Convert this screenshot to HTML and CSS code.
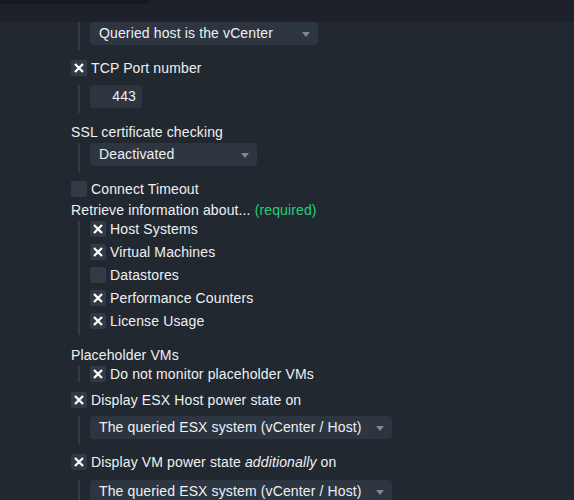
FILE: index.html
```html
<!DOCTYPE html>
<html>
<head>
<meta charset="utf-8">
<link rel="stylesheet" href="styles.css">
</head>
<body>
<div class="topbar"><div class="tab"></div></div>
<div class="form">
  <div class="nest n1">
    <div class="select w-vcenter"><span>Queried host is the vCenter</span><i class="arrow"></i></div>
  </div>

  <div class="check-row r-tcp">
    <span class="cb"><svg viewBox="0 0 16 16"><path d="M4 4 L12 12 M12 4 L4 12"/></svg></span>
    <span>TCP Port number</span>
  </div>
  <div class="nest n2">
    <div class="input">443</div>
  </div>

  <div class="label l-ssl">SSL certificate checking</div>
  <div class="nest n3">
    <div class="select w-deact"><span>Deactivated</span><i class="arrow"></i></div>
  </div>

  <div class="check-row r-timeout">
    <span class="cb"></span>
    <span>Connect Timeout</span>
  </div>
  <div class="label l-retrieve">Retrieve information about... <span class="req">(required)</span></div>
  <div class="nest n4">
    <div class="list">
      <div class="check-row"><span class="cb"><svg viewBox="0 0 16 16"><path d="M4 4 L12 12 M12 4 L4 12"/></svg></span><span>Host Systems</span></div>
      <div class="check-row"><span class="cb"><svg viewBox="0 0 16 16"><path d="M4 4 L12 12 M12 4 L4 12"/></svg></span><span>Virtual Machines</span></div>
      <div class="check-row"><span class="cb"></span><span>Datastores</span></div>
      <div class="check-row"><span class="cb"><svg viewBox="0 0 16 16"><path d="M4 4 L12 12 M12 4 L4 12"/></svg></span><span>Performance Counters</span></div>
      <div class="check-row"><span class="cb"><svg viewBox="0 0 16 16"><path d="M4 4 L12 12 M12 4 L4 12"/></svg></span><span>License Usage</span></div>
    </div>
  </div>

  <div class="label l-placeholder">Placeholder VMs</div>
  <div class="nest n5">
    <div class="check-row"><span class="cb"><svg viewBox="0 0 16 16"><path d="M4 4 L12 12 M12 4 L4 12"/></svg></span><span>Do not monitor placeholder VMs</span></div>
  </div>

  <div class="check-row r-esx">
    <span class="cb"><svg viewBox="0 0 16 16"><path d="M4 4 L12 12 M12 4 L4 12"/></svg></span>
    <span>Display ESX Host power state on</span>
  </div>
  <div class="nest n6">
    <div class="select w-esx"><span>The queried ESX system (vCenter / Host)</span><i class="arrow"></i></div>
  </div>

  <div class="check-row r-vm">
    <span class="cb"><svg viewBox="0 0 16 16"><path d="M4 4 L12 12 M12 4 L4 12"/></svg></span>
    <span>Display VM power state <em>additionally</em> on</span>
  </div>
  <div class="nest n7">
    <div class="select w-esx"><span>The queried ESX system (vCenter / Host)</span><i class="arrow"></i></div>
  </div>
</div>
</body>
</html>
```

FILE: styles.css
```css
html, body {
  margin: 0;
  padding: 0;
}
body {
  background: #222830;
  color: #eef0f2;
  font-family: "Liberation Sans", Arial, sans-serif;
  font-size: 14px;
  line-height: 16px;
  letter-spacing: 0.13px;
  overflow: hidden;
  height: 500px;
}
.topbar {
  height: 22px;
  background: #1e2129;
}
.tab {
  width: 150px;
  height: 4px;
  background: #151a21;
  border-bottom-right-radius: 4px;
}
.form {
  padding-left: 71px;
  display: flex;
  flex-direction: column;
  align-items: flex-start;
}
.nest {
  margin-left: 7px;
  border-left: 2px solid #343b46;
  padding-left: 10px;
  padding-bottom: 5px;
  align-self: stretch;
}
.select {
  height: 23px;
  background: #2d3541;
  border-radius: 4px;
  display: flex;
  align-items: center;
  justify-content: space-between;
  padding: 0 8px 0 9px;
  box-sizing: border-box;
  line-height: 16px;
}
.select span {
  position: relative;
  top: -1px;
}
.arrow {
  width: 0;
  height: 0;
  border-left: 4px solid transparent;
  border-right: 4px solid transparent;
  border-top: 5px solid #7f8791;
  margin-top: 2px;
}
.w-vcenter { width: 228px; }
.w-deact { width: 167px; }
.w-esx { width: 302px; }
.input {
  width: 52px;
  height: 23px;
  background: #2d3541;
  border-radius: 4px;
  box-sizing: border-box;
  text-align: right;
  padding-right: 6px;
  line-height: 22px;
}
.check-row {
  display: flex;
  align-items: center;
  gap: 4px;
  height: 16px;
}
.cb {
  width: 16px;
  height: 16px;
  background: #323a46;
  border-radius: 2px;
  flex: none;
  display: flex;
}
.cb svg {
  width: 16px;
  height: 16px;
}
.cb svg path {
  stroke: #ffffff;
  stroke-width: 2.3;
  fill: none;
}
.req { color: #22cf7d; }
em { font-style: italic; }

.r-tcp { margin-top: 10px; }
.n2 { margin-top: 9px; }
.l-ssl { margin-top: 11px; }
.n3 { margin-top: 3px; padding-bottom: 6px; }
.r-timeout { margin-top: 9px; }
.l-retrieve { margin-top: 5px; }
.n4 { margin-top: 3px; padding-bottom: 6px; }
.list {
  display: flex;
  flex-direction: column;
  gap: 7px;
}
.l-placeholder { margin-top: 12px; }
.n5 { margin-top: 3px; padding-bottom: 0; }
.r-esx { margin-top: 10px; }
.n6 { margin-top: 8px; }
.r-vm { margin-top: 10px; }
.n7 { margin-top: 10px; }
```
